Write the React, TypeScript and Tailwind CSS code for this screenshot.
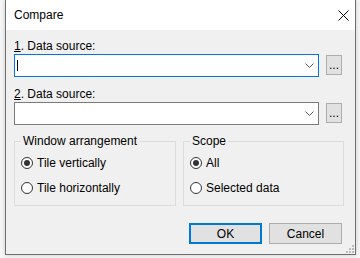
import React from "react";

function Radio({ checked, label }: { checked?: boolean; label: string }) {
  return (
    <div className="flex h-[14px] items-center leading-[14px]">
      <svg width="12" height="12" viewBox="0 0 12 12" className="shrink-0">
        <circle cx="6" cy="6" r="5.5" fill="#ffffff" stroke="#333333" strokeWidth="1" />
        {checked && <circle cx="6" cy="6" r="3" fill="#333333" />}
      </svg>
      <span className="ml-[4px] text-black">{label}</span>
    </div>
  );
}

function Combo({ focused, caret }: { focused?: boolean; caret?: boolean }) {
  return (
    <div
      className={
        "flex h-[23px] w-[305px] items-center justify-between bg-white pl-[2px] pr-[4px] " +
        (focused ? "border border-[#0078d7]" : "border border-[#7a7a7a]")
      }
    >
      <div className="h-[11px] w-[1px]">{caret && <div className="h-[11px] w-[1px] bg-black" />}</div>
      <svg width="9" height="5" viewBox="0 0 9 5">
        <path d="M0.5 0.5 L4.5 4.5 L8.5 0.5" fill="none" stroke="#555555" strokeWidth="1" />
      </svg>
    </div>
  );
}

function DotsButton() {
  return (
    <div className="mt-[1px] flex h-[20px] w-[16px] items-center justify-center border border-[#adadad] bg-[#e1e1e1] text-[12px] leading-[12px] text-black">
      ...
    </div>
  );
}

function Group({
  title,
  width,
  pl,
  children,
}: {
  title: string;
  width: string;
  pl: string;
  children: React.ReactNode;
}) {
  return (
    <div className={"relative h-[65px] border border-[#dcdcdc] " + width + " " + pl}>
      <span className="absolute left-[6px] top-[-8px] bg-[#f0f0f0] px-[2px] leading-[14px] text-black">
        {title}
      </span>
      <div className="flex flex-col gap-[11px] pt-[14px]">{children}</div>
    </div>
  );
}

export default function App() {
  return (
    <div
      className="relative h-[258px] w-[360px] overflow-hidden bg-[#f7f7f7] text-[12px] text-black"
      style={{ fontFamily: '"Liberation Sans", Arial, sans-serif' }}
    >
      <div className="ml-[5px] flex h-[255px] w-[351px] flex-col border-x border-b border-[#6e6e6e] shadow-[0_0_5px_rgba(0,0,0,0.18)]">
        <div className="flex h-[30px] items-center justify-between bg-white pl-[8px] pr-[6px]">
          <span className="leading-[14px]">Compare</span>
          <svg width="11" height="11" viewBox="0 0 11 11">
            <path d="M0.5 0.5 L10.5 10.5 M10.5 0.5 L0.5 10.5" stroke="#000000" strokeWidth="1" />
          </svg>
        </div>
        <div className="relative flex flex-1 flex-col bg-[#f0f0f0] pl-[8px]">
          <div className="mt-[9px] leading-[14px]">
            <u>1</u>. Data source:
          </div>
          <div className="mt-[1px] flex gap-[7px]">
            <Combo focused caret />
            <DotsButton />
          </div>
          <div className="mt-[10px] leading-[14px]">
            <u>2</u>. Data source:
          </div>
          <div className="mt-[1px] flex gap-[7px]">
            <Combo />
            <DotsButton />
          </div>
          <div className="mt-[16px] flex gap-[7px]">
            <Group title="Window arrangement" width="w-[162px]" pl="pl-[6px]">
              <Radio checked label="Tile vertically" />
              <Radio label="Tile horizontally" />
            </Group>
            <Group title="Scope" width="w-[161px]" pl="pl-[6px]">
              <Radio checked label="All" />
              <Radio label="Selected data" />
            </Group>
          </div>
          <div className="mt-[17px] flex justify-end gap-[7px] pr-[13px]">
            <div className="flex h-[21px] w-[73px] items-center justify-center border-2 border-[#0078d7] bg-[#e1e1e1] leading-[14px]">
              OK
            </div>
            <div className="flex h-[21px] w-[73px] items-center justify-center border border-[#adadad] bg-[#e1e1e1] leading-[14px]">
              Cancel
            </div>
          </div>
          <svg
            width="8"
            height="8"
            viewBox="0 0 8 8"
            className="absolute bottom-[1px] right-[1px]"
          >
            <rect x="6" y="0" width="2" height="2" fill="#bdbdbd" />
            <rect x="3" y="3" width="2" height="2" fill="#bdbdbd" />
            <rect x="6" y="3" width="2" height="2" fill="#bdbdbd" />
            <rect x="0" y="6" width="2" height="2" fill="#bdbdbd" />
            <rect x="3" y="6" width="2" height="2" fill="#bdbdbd" />
            <rect x="6" y="6" width="2" height="2" fill="#bdbdbd" />
          </svg>
        </div>
      </div>
    </div>
  );
}
